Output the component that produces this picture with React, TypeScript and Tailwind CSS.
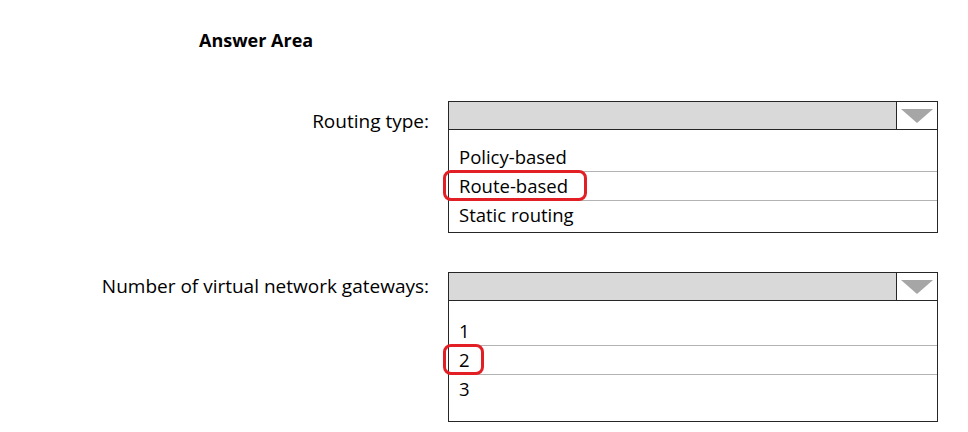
import React from "react";

const font = { fontFamily: '"Open Sans", "Noto Sans", sans-serif' };

function Arrow() {
  return (
    <svg width="34" height="16" viewBox="0 0 34 16" className="block">
      <polygon points="1,1 33,1 17,15" fill="#a6a6a6" />
    </svg>
  );
}

function Dropdown({
  options,
  picked,
  padTop,
  padBottom,
  ringWidth,
}: {
  options: string[];
  picked: number;
  padTop: string;
  padBottom: string;
  ringWidth: string;
}) {
  return (
    <div className="w-[490px] border border-[#262626] bg-white">
      <div className="flex h-[28px] border-b border-[#262626] bg-[#d9d9d9]">
        <div className="flex-1" />
        <div className="flex w-[41px] items-center justify-center border-l border-[#262626] bg-white">
          <Arrow />
        </div>
      </div>
      <div className={padTop + " " + padBottom}>
        {options.map((o, i) => (
          <div
            key={o}
            className={
              "relative flex h-[29px] items-center pl-[10px] text-[18.5px] leading-none text-black " +
              (i < options.length - 1 ? "border-b border-[#b3b3b3]" : "")
            }
          >
            {o}
            {i === picked && (
              <div
                className={
                  "absolute -left-[6px] -top-[2px] h-[31px] rounded-[8px] border-[3px] border-[#e31f26] " +
                  ringWidth
                }
              />
            )}
          </div>
        ))}
      </div>
    </div>
  );
}

export default function App() {
  return (
    <div className="h-[432px] w-[968px] bg-white text-black" style={font}>
      <div className="pl-[199px] pt-[27px] text-[18px] font-bold leading-[26px]">Answer Area</div>

      <div className="mt-[48px] flex">
        <div className="w-[448px] pr-[19px] pt-[7px] text-right text-[19px] leading-[26px]">Routing type:</div>
        <Dropdown
          options={["Policy-based", "Route-based", "Static routing"]}
          picked={1}
          padTop="pt-[13px]"
          padBottom="pb-[2px]"
          ringWidth="w-[144px]"
        />
      </div>

      <div className="mt-[39px] flex">
        <div className="w-[448px] pr-[19px] pt-[1px] text-right text-[19px] leading-[26px]">
          Number of virtual network gateways:
        </div>
        <Dropdown
          options={["1", "2", "3"]}
          picked={1}
          padTop="pt-[16px]"
          padBottom="pb-[17px]"
          ringWidth="w-[41px]"
        />
      </div>
    </div>
  );
}
